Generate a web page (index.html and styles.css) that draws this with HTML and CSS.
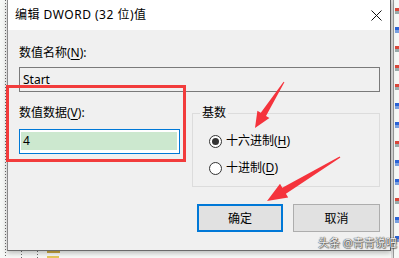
FILE: index.html
```html
<!DOCTYPE html>
<html lang="zh-CN">
<head>
<meta charset="utf-8">
<title>编辑 DWORD (32 位)值</title>
<link rel="stylesheet" href="styles.css">
</head>
<body>
<div class="desktop">
  <div class="side-icons">
    <span class="ico red"></span><span class="ico blue"></span><span class="ico red"></span><span class="ico red"></span><span class="ico red"></span><span class="ico blue"></span><span class="ico blue"></span><span class="ico red"></span><span class="ico blue"></span><span class="ico blue"></span><span class="ico red"></span><span class="ico blue"></span><span class="ico blue"></span>
  </div>
  <div class="dialog">
    <div class="titlebar">
      <span class="title">编辑 DWORD (32 位)值</span>
      <svg class="close" width="11" height="11" viewBox="0 0 11 11"><path d="M0.5 0.5 L10.5 10.5 M10.5 0.5 L0.5 10.5" stroke="#111" stroke-width="1" fill="none"/></svg>
    </div>
    <div class="content">
      <div class="label">数值名称(<u>N</u>):</div>
      <div class="field readonly">Start</div>
      <div class="row">
        <div class="col">
          <div class="label">数值数据(<u>V</u>):</div>
          <div class="field active"><div class="sel">4</div></div>
        </div>
        <fieldset class="group">
          <legend>基数</legend>
          <div class="radio first"><span class="circle on"></span><span class="rtext">十六进制(<u>H</u>)</span></div>
          <div class="radio"><span class="circle"></span><span class="rtext">十进制(<u>D</u>)</span></div>
        </fieldset>
      </div>
      <div class="buttons">
        <div class="btn default">确定</div>
        <div class="btn">取消</div>
      </div>
    </div>
  </div>
  <div class="highlight"></div>
  <svg class="arrows" width="399" height="258" viewBox="0 0 399 258">
    <polygon fill="#f5333c" points="284.4,82.3 266,116 269.4,118.1 255,128 257.4,110.7 260.8,112.8 283.6,81.7"/>
    <polygon fill="#f5333c" points="340.4,157.6 285.9,193.7 288.2,197.6 267,201 280,183.8 282.3,187.7 339.6,156.4"/>
  </svg>
  <div class="watermark">头条 @青青说吧</div>
</div>
</body>
</html>
```
FILE: styles.css
```css
html, body {
  margin: 0;
  padding: 0;
  background: #fff;
}
.desktop {
  position: relative;
  width: 399px;
  height: 258px;
  overflow: hidden;
  font-family: "Noto Sans", "Noto Sans CJK SC", sans-serif;
  font-size: 12px;
  color: #000;
  background:
    repeating-linear-gradient(#6a6a6a 0 1px, transparent 1px 3px) 5px 0 / 1px 100% no-repeat,
    repeating-linear-gradient(#6a6a6a 0 1px, transparent 1px 3px) 21px 251px / 1px 7px no-repeat,
    repeating-linear-gradient(#6a6a6a 0 1px, transparent 1px 3px) 37px 251px / 1px 7px no-repeat,
    linear-gradient(#c9a640, #c9a640) 47px 251px / 13px 2px no-repeat,
    linear-gradient(#e6c65a, #e6c65a) 47px 256px / 12px 2px no-repeat,
    linear-gradient(#9a9a9a, #9a9a9a) 393px 0 / 1px 100% no-repeat,
    linear-gradient(#dedede, #dedede) 391px 0 / 2px 100% no-repeat,
    #f6f8f6;
}
.side-icons {
  position: absolute;
  left: 395px;
  top: 8px;
  display: flex;
  flex-direction: column;
  gap: 13px;
}
.ico {
  display: block;
  width: 4px;
  height: 6px;
}
.ico.red { background: linear-gradient(#d9473a 0 50%, #9aa 50%); }
.ico.blue { background: linear-gradient(#2b63d6 0 50%, #7aa0e0 50%); }
.dialog {
  position: relative;
  margin-left: 7px;
  width: 384px;
  height: 251px;
  box-sizing: border-box;
  border-left: 1px solid #8a8a8a;
  border-right: 1px solid #5c5c5c;
  border-bottom: 1px solid #6a6a6a;
  background: #f0f0f0;
  box-shadow: 0 2px 5px rgba(0, 0, 0, 0.25);
  display: flex;
  flex-direction: column;
}
.titlebar {
  height: 30px;
  background: #fff;
  display: flex;
  align-items: center;
  justify-content: space-between;
  padding: 0 8px 0 7px;
  flex: none;
}
.title {
  line-height: 16px;
  font-size: 12px;
  letter-spacing: 0.5px;
}
.close {
  display: block;
}
.content {
  padding: 15px 10px 0 11px;
}
.label {
  line-height: 16px;
  height: 16px;
}
u {
  text-decoration: underline;
  text-underline-offset: 2px;
}
.field {
  box-sizing: border-box;
  height: 25px;
  margin-top: 6px;
  border: 1px solid #7a7a7a;
  padding-left: 3px;
  line-height: 23px;
}
.field.readonly {
  background: #f0f0f0;
}
.field.active {
  margin-top: 8px;
  border-color: #0078d7;
  background: #fff;
  padding: 1px 2px 0 1px;
}
.sel {
  height: 18px;
  line-height: 18px;
  margin-top: 1px;
  background: #cce8cf;
  padding-left: 2px;
}
.row {
  margin-top: 13px;
  display: flex;
  gap: 12px;
}
.col {
  width: 161px;
  flex: none;
}
.group {
  box-sizing: border-box;
  width: 188px;
  height: 82px;
  margin: 0;
  padding: 0 0 0 16px;
  border: 1px solid #dcdcdc;
  flex: none;
}
.group legend {
  padding: 0 2px;
  margin-left: -9px;
  line-height: 16px;
  height: 16px;
}
.radio {
  display: flex;
  align-items: center;
  gap: 4px;
  line-height: 16px;
  height: 16px;
  margin-top: 11px;
}
.radio.first {
  margin-top: 12px;
}
.rtext {
  white-space: nowrap;
}
.circle {
  box-sizing: border-box;
  width: 13px;
  height: 13px;
  border: 1px solid #333;
  border-radius: 50%;
  background: #fff;
  display: flex;
  align-items: center;
  justify-content: center;
  flex: none;
}
.circle.on::after {
  content: "";
  width: 7px;
  height: 7px;
  border-radius: 50%;
  background: #333;
}
.buttons {
  margin-top: 17px;
  display: flex;
  justify-content: flex-end;
  gap: 10px;
}
.btn {
  box-sizing: border-box;
  width: 87px;
  height: 28px;
  border: 1px solid #adadad;
  background: #e1e1e1;
  display: flex;
  align-items: center;
  justify-content: center;
}
.btn.default {
  width: 86px;
  border: 2px solid #0078d7;
}
.highlight {
  position: absolute;
  left: 6px;
  top: 85px;
  width: 180px;
  height: 77px;
  box-sizing: border-box;
  border: 3px solid #f23c3c;
}
.arrows {
  position: absolute;
  left: 0;
  top: 0;
}
.watermark {
  position: absolute;
  left: 318px;
  top: 236px;
  font-size: 11px;
  line-height: 14px;
  color: #f4f4f4;
  text-shadow: 0 0 1px #333, 0 0 1px #333, 1px 1px 1px rgba(0,0,0,0.5);
  white-space: nowrap;
}
```
